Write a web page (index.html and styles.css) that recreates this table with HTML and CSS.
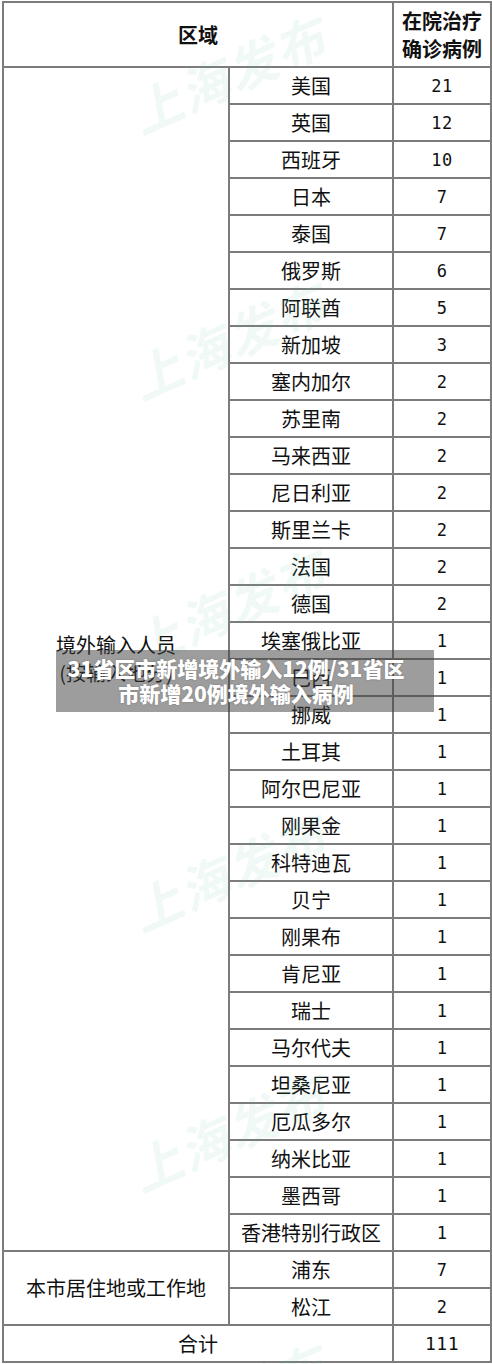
FILE: index.html
```html
<!DOCTYPE html>
<html lang="zh-CN">
<head>
<meta charset="utf-8">
<title>在院治疗确诊病例</title>
<link rel="stylesheet" href="styles.css">
</head>
<body>
<div class="page">
  <table class="stats">
    <colgroup>
      <col class="c1"><col class="c2"><col class="c3">
    </colgroup>
    <thead>
      <tr class="head">
        <th colspan="2">区域</th>
        <th>在院治疗<br>确诊病例</th>
      </tr>
    </thead>
    <tbody>
      <tr><td rowspan="32" class="group">境外输入人员<br>(按输入地分)</td><td class="place">美国</td><td class="num">21</td></tr>
      <tr><td class="place">英国</td><td class="num">12</td></tr>
      <tr><td class="place">西班牙</td><td class="num">10</td></tr>
      <tr><td class="place">日本</td><td class="num">7</td></tr>
      <tr><td class="place">泰国</td><td class="num">7</td></tr>
      <tr><td class="place">俄罗斯</td><td class="num">6</td></tr>
      <tr><td class="place">阿联酋</td><td class="num">5</td></tr>
      <tr><td class="place">新加坡</td><td class="num">3</td></tr>
      <tr><td class="place">塞内加尔</td><td class="num">2</td></tr>
      <tr><td class="place">苏里南</td><td class="num">2</td></tr>
      <tr><td class="place">马来西亚</td><td class="num">2</td></tr>
      <tr><td class="place">尼日利亚</td><td class="num">2</td></tr>
      <tr><td class="place">斯里兰卡</td><td class="num">2</td></tr>
      <tr><td class="place">法国</td><td class="num">2</td></tr>
      <tr><td class="place">德国</td><td class="num">2</td></tr>
      <tr><td class="place">埃塞俄比亚</td><td class="num">1</td></tr>
      <tr><td class="place">巴西</td><td class="num">1</td></tr>
      <tr><td class="place">挪威</td><td class="num">1</td></tr>
      <tr><td class="place">土耳其</td><td class="num">1</td></tr>
      <tr><td class="place">阿尔巴尼亚</td><td class="num">1</td></tr>
      <tr><td class="place">刚果金</td><td class="num">1</td></tr>
      <tr><td class="place">科特迪瓦</td><td class="num">1</td></tr>
      <tr><td class="place">贝宁</td><td class="num">1</td></tr>
      <tr><td class="place">刚果布</td><td class="num">1</td></tr>
      <tr><td class="place">肯尼亚</td><td class="num">1</td></tr>
      <tr><td class="place">瑞士</td><td class="num">1</td></tr>
      <tr><td class="place">马尔代夫</td><td class="num">1</td></tr>
      <tr><td class="place">坦桑尼亚</td><td class="num">1</td></tr>
      <tr><td class="place">厄瓜多尔</td><td class="num">1</td></tr>
      <tr><td class="place">纳米比亚</td><td class="num">1</td></tr>
      <tr><td class="place">墨西哥</td><td class="num">1</td></tr>
      <tr><td class="place">香港特别行政区</td><td class="num">1</td></tr>
      <tr><td rowspan="2" class="group">本市居住地或工作地</td><td class="place">浦东</td><td class="num">7</td></tr>
      <tr><td class="place">松江</td><td class="num">2</td></tr>
      <tr class="total"><td colspan="2">合计</td><td class="num">111</td></tr>
    </tbody>
  </table>

  <div class="watermark wm1">上海发布</div>
  <div class="watermark wm2">上海发布</div>
  <div class="watermark wm3">上海发布</div>
  <div class="watermark wm4">上海发布</div>
  <div class="watermark wm5">上海发布</div>
  <div class="watermark wm6">上海发布</div>

  <div class="banner">
    <p class="banner-text">31省区市新增境外输入12例/31省区<br>市新增20例境外输入病例</p>
  </div>
</div>
</body>
</html>
```

FILE: styles.css
```css
html, body {
  margin: 0;
  padding: 0;
  background: #ffffff;
}

.page {
  position: relative;
  width: 492px;
  height: 1364px;
  overflow: hidden;
  font-family: "Noto Sans CJK SC", "Noto Sans", sans-serif;
  color: #111111;
}

.stats {
  border-collapse: collapse;
  table-layout: fixed;
  width: 488px;
  margin: 1px 0 0 2px;
  font-size: 20px;
}

.c1 { width: 226px; }
.c2 { width: 164px; }
.c3 { width: 98px; }

.stats th,
.stats td {
  border: 2px solid #7c7c7c;
  padding: 0;
  text-align: center;
  vertical-align: middle;
  line-height: 28px;
}

.head th {
  height: 63px;
  font-weight: 700;
}

.stats td {
  height: 35px;
}

.stats td.place {
  border-left-color: #222222;
}

.group {
  line-height: 30px;
}

.num {
  font-family: "DejaVu Sans Mono", "Liberation Mono", monospace;
  font-size: 17px;
  letter-spacing: 0.5px;
}

.total .num {
  font-size: 18px;
}

.watermark {
  position: absolute;
  left: 118px;
  font-size: 50px;
  font-weight: 700;
  font-style: italic;
  letter-spacing: 2px;
  color: rgba(90, 185, 160, 0.09);
  transform: rotate(-24deg);
  transform-origin: left top;
  white-space: nowrap;
  pointer-events: none;
}

.wm1 { top: 82px; }
.wm2 { top: 348px; }
.wm3 { top: 615px; }
.wm4 { top: 880px; }
.wm5 { top: 1140px; }
.wm6 { top: 1410px; }

.banner {
  position: absolute;
  left: 56px;
  top: 650px;
  width: 378px;
  height: 62px;
  background: rgba(60, 60, 60, 0.5);
  display: flex;
  align-items: center;
  justify-content: center;
}

.banner-text {
  margin: 0;
  padding-right: 18px;
  color: #ffffff;
  font-size: 21px;
  font-weight: 900;
  line-height: 25px;
  text-align: center;
  white-space: nowrap;
  text-shadow: 0 0 2px rgba(0, 0, 0, 0.25);
}
```
